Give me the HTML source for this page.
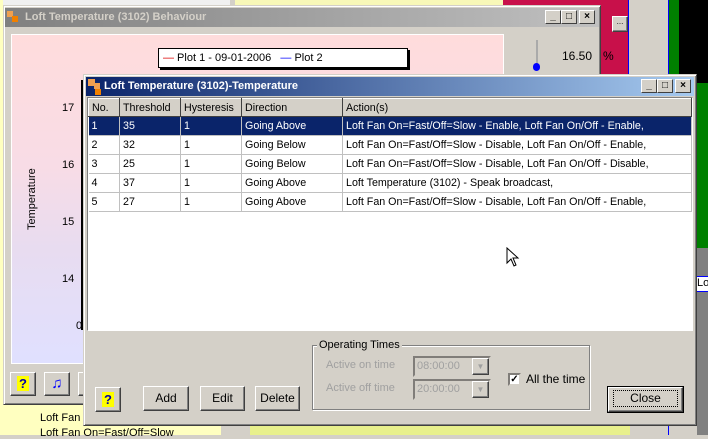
<!DOCTYPE html>
<html><head><style>
*{margin:0;padding:0;box-sizing:border-box}
body{width:708px;height:435px;position:relative;overflow:hidden;background:#d4d0c8;font-family:"Liberation Sans",Arial,sans-serif;font-size:11px;color:#000}
.a{position:absolute}
.btn{position:absolute;background:#d4d0c8;border:1px solid;border-color:#fff #404040 #404040 #fff;box-shadow:inset -1px -1px #808080;text-align:center;font-size:11px}
.tb{position:absolute;width:16px;height:14px;background:#d4d0c8;border:1px solid;border-color:#fff #404040 #404040 #fff;font-size:10px;line-height:12px;text-align:center;font-weight:bold}
table{border-collapse:collapse}
td{height:19px;border-right:1px solid #c0c0c0;border-bottom:1px solid #c0c0c0;padding-left:3px;white-space:nowrap;font-size:10.7px}
th{height:18px;font-weight:normal;text-align:left;padding-left:3px;background:#d4d0c8;border:1px solid;border-color:#fff #404040 #404040 #fff;font-size:10.7px}
.sel td{background:#0a246a;color:#fff}
</style></head><body>
<!-- background -->
<div class="a" style="left:0;top:0;width:230px;height:6px;background:#f0f0f0"></div>
<div class="a" style="left:235px;top:0;width:268px;height:6px;background:#f8f8b8"></div>
<div class="a" style="left:503px;top:0;width:125px;height:435px;background:#c8104a"></div>
<div class="a" style="left:628px;top:0;width:41px;height:435px;background:#d4d0c8;border-left:1px solid #00f;border-right:1px solid #00f"></div>
<div class="a" style="left:669px;top:0;width:10px;height:83px;background:#008000"></div>
<div class="a" style="left:679px;top:0;width:29px;height:83px;background:#000"></div>
<div class="a" style="left:669px;top:83px;width:39px;height:165px;background:#008000"></div>
<div class="a" style="left:697px;top:248px;width:11px;height:187px;background:#808080"></div>
<div class="a" style="left:697px;top:276px;width:11px;height:16px;background:#fff;border-top:1px solid #00f;border-bottom:1px solid #00f;font-size:11px">Lo</div>
<div class="a" style="left:0;top:405px;width:221px;height:30px;background:#ffffc0"></div>
<div class="a" style="left:250px;top:425px;width:380px;height:10px;background:#e8f08c"></div>
<div class="a" style="left:40px;top:412px;font-size:11px">Loft Fan I</div>
<div class="a" style="left:40px;top:427px;font-size:11px">Loft Fan On=Fast/Off=Slow</div>
<div class="a" style="left:0;top:0;width:3px;height:405px;background:#ffffc0"></div>

<!-- behaviour window -->
<div class="a" style="left:3px;top:5px;width:598px;height:400px;background:#d4d0c8;border:1px solid;border-color:#d4d0c8 #404040 #404040 #d4d0c8;box-shadow:inset 1px 1px #fff,inset -1px -1px #808080"></div>
<div class="a" style="left:5px;top:8px;width:594px;height:19px;background:linear-gradient(90deg,#808080,#c0c0c0);color:#d4d0c8;font-weight:bold;font-size:11px;line-height:19px;padding-left:20px">Loft Temperature (3102) Behaviour</div>
<div class="a" style="left:7px;top:11px;width:6px;height:6px;background:#f0a050"></div>
<div class="a" style="left:12px;top:16px;width:6px;height:6px;background:#f08000"></div>
<div class="tb" style="left:545px;top:10px">_</div><div class="tb" style="left:561px;top:10px">□</div><div class="tb" style="left:579px;top:10px">×</div>
<div class="a" style="left:11px;top:34px;width:493px;height:330px;background:linear-gradient(#ffdcdc,#f8dce6 40%,#e8dcf0 65%,#e0e0ff);border:1px solid #fff"></div>
<div class="a" style="left:158px;top:48px;width:250px;height:20px;background:#fff;border:1px solid #000;box-shadow:2px 2px #000;font-size:11px;line-height:18px;padding-left:4px"><span style="color:#d00">—</span> Plot 1 - 09-01-2006 &nbsp; <span style="color:#00f">—</span> Plot 2</div>
<div class="a" style="left:81px;top:80px;width:2px;height:250px;background:#000"></div>
<div class="a" style="left:62px;top:102px">17</div>
<div class="a" style="left:62px;top:159px">16</div>
<div class="a" style="left:62px;top:216px">15</div>
<div class="a" style="left:62px;top:273px">14</div>
<div class="a" style="left:76px;top:320px">0</div>
<div class="a" style="left:26px;top:230px;transform:rotate(-90deg);transform-origin:left top">Temperature</div>
<div class="a" style="left:536px;top:40px;width:2px;height:28px;background:#aaa"></div>
<div class="a" style="left:533px;top:63px;width:7px;height:8px;border-radius:4px;background:#00f"></div>
<div class="a" style="left:562px;top:49px;font-size:12px">16.50</div>
<div class="a" style="left:603px;top:49px;font-size:12px">%</div>
<div class="btn" style="left:612px;top:16px;width:16px;height:16px;font-size:8px">...</div>
<div class="btn" style="left:10px;top:372px;width:26px;height:24px;color:#00a;font-weight:bold;font-size:13px;line-height:22px"><span style="background:#ff0;padding:0 2px">?</span></div>
<div class="btn" style="left:44px;top:372px;width:26px;height:24px;color:#00f;font-size:15px;line-height:22px">♫</div>
<div class="btn" style="left:78px;top:372px;width:26px;height:24px"></div>

<!-- dialog -->
<div class="a" style="left:83px;top:74px;width:614px;height:352px;background:#d4d0c8;border:1px solid;border-color:#d4d0c8 #404040 #404040 #d4d0c8;box-shadow:inset 1px 1px #fff,inset -1px -1px #808080"></div>
<div class="a" style="left:86px;top:77px;width:608px;height:19px;background:linear-gradient(90deg,#0a246a,#a6caf0);color:#fff;font-weight:bold;font-size:11px;line-height:19px;padding-left:18px">Loft Temperature (3102)-Temperature</div>
<div class="a" style="left:88px;top:79px;width:7px;height:7px;background:#f0a050"></div>
<div class="a" style="left:94px;top:83px;width:6px;height:6px;background:#f0a050"></div>
<div class="a" style="left:95px;top:89px;width:6px;height:6px;background:#f08000"></div>
<div class="tb" style="left:641px;top:79px">_</div><div class="tb" style="left:657px;top:79px">□</div><div class="tb" style="left:675px;top:79px;width:16px">×</div>
<div class="a" style="left:87px;top:97px;width:606px;height:234px;background:#fff;border:1px solid;border-color:#808080 #fff #fff #808080;overflow:hidden">
<table style="width:604px">
<tr><th style="width:31px">No.</th><th style="width:61px">Threshold</th><th style="width:61px">Hysteresis</th><th style="width:101px">Direction</th><th>Action(s)</th></tr>
<tr class="sel"><td>1</td><td>35</td><td>1</td><td>Going Above</td><td>Loft Fan On=Fast/Off=Slow - Enable, Loft Fan On/Off - Enable,</td></tr>
<tr><td>2</td><td>32</td><td>1</td><td>Going Below</td><td>Loft Fan On=Fast/Off=Slow - Disable, Loft Fan On/Off - Enable,</td></tr>
<tr><td>3</td><td>25</td><td>1</td><td>Going Below</td><td>Loft Fan On=Fast/Off=Slow - Disable, Loft Fan On/Off - Disable,</td></tr>
<tr><td>4</td><td>37</td><td>1</td><td>Going Above</td><td>Loft Temperature (3102) - Speak broadcast,</td></tr>
<tr><td>5</td><td>27</td><td>1</td><td>Going Above</td><td>Loft Fan On=Fast/Off=Slow - Disable, Loft Fan On/Off - Enable,</td></tr>
</table></div>
<div class="a" style="left:312px;top:345px;width:278px;height:65px;border:1px solid #808080;box-shadow:1px 1px #fff,inset 1px 1px #fff"></div>
<div class="a" style="left:317px;top:339px;background:#d4d0c8;padding:0 2px">Operating Times</div>
<div class="a" style="left:326px;top:359px;color:#a0a0a0">Active on time</div>
<div class="a" style="left:326px;top:382px;color:#a0a0a0">Active off time</div>
<div class="a" style="left:413px;top:356px;width:78px;height:21px;border:2px inset #d4d0c8;color:#a0a0a0;padding:2px 2px;background:#d4d0c8">08:00:00</div>
<div class="a" style="left:413px;top:379px;width:78px;height:21px;border:2px inset #d4d0c8;color:#a0a0a0;padding:2px 2px;background:#d4d0c8">20:00:00</div>
<div class="btn" style="left:472px;top:358px;width:17px;height:17px;color:#a0a0a0;font-size:8px;line-height:15px">▼</div>
<div class="btn" style="left:472px;top:381px;width:17px;height:17px;color:#a0a0a0;font-size:8px;line-height:15px">▼</div>
<div class="a" style="left:508px;top:373px;width:13px;height:13px;background:#fff;border:2px inset #d4d0c8;font-size:10px;line-height:9px;text-align:center;font-weight:bold">✓</div>
<div class="a" style="left:526px;top:372px;font-size:12px">All the time</div>
<div class="btn" style="left:95px;top:387px;width:26px;height:25px;color:#00a;font-weight:bold;font-size:13px;line-height:23px"><span style="background:#ff0;padding:0 2px">?</span></div>
<div class="btn" style="left:143px;top:386px;width:46px;height:25px;line-height:23px;font-size:12px">Add</div>
<div class="btn" style="left:200px;top:386px;width:45px;height:25px;line-height:23px;font-size:12px">Edit</div>
<div class="btn" style="left:255px;top:386px;width:45px;height:25px;line-height:23px;font-size:12px">Delete</div>
<div class="btn" style="left:608px;top:387px;width:75px;height:25px;line-height:21px;font-size:12px;outline:1px solid #000"><span style="border:1px dotted #000;display:inline-block;width:65px;height:17px;line-height:15px;margin-top:2px">Close</span></div>
<svg class="a" style="left:506px;top:247px" width="14" height="22"><path d="M1 1 L1 16 L5 12 L8 19 L10 18 L7 11 L12 11 Z" fill="#fff" stroke="#000"/></svg>
</body></html>
